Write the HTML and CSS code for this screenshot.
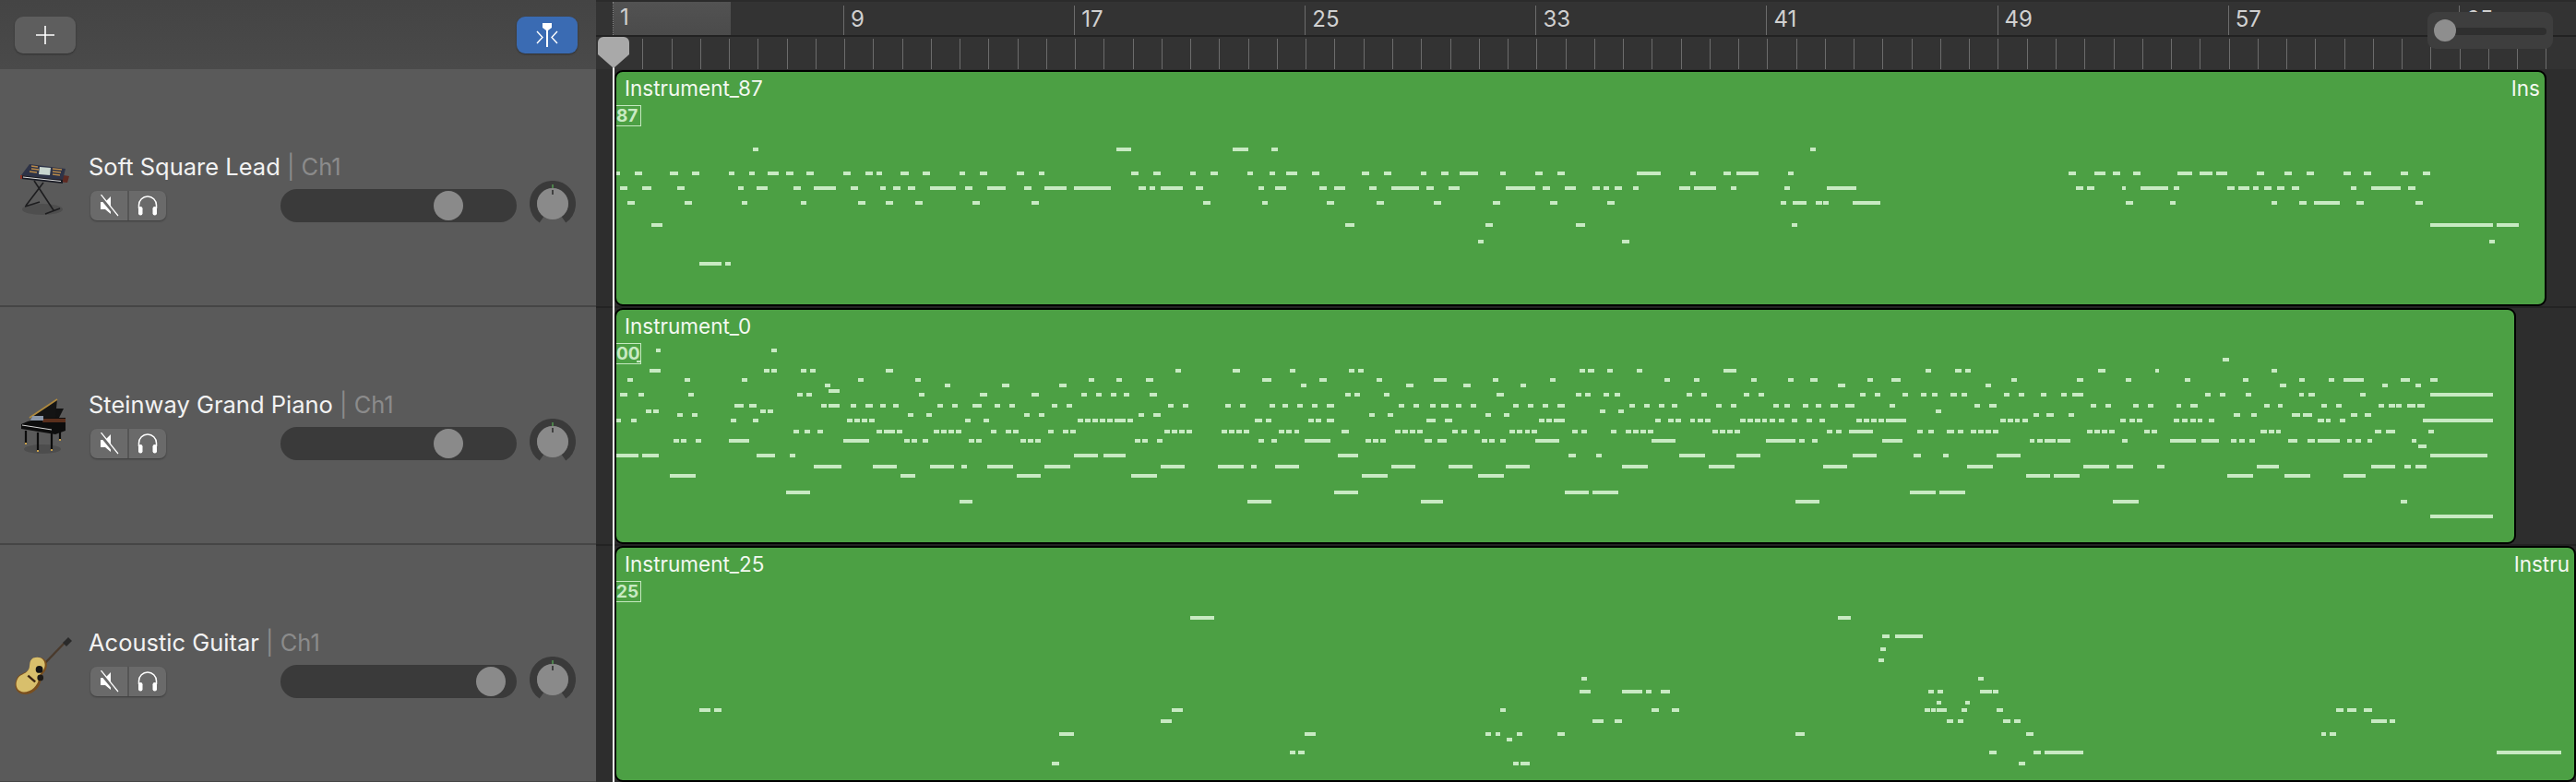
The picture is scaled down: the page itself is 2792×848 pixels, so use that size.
FILE: index.html
```html
<!DOCTYPE html>
<html>
<head>
<meta charset="utf-8">
<title>Tracks</title>
<link rel="stylesheet" href="styles.css">
</head>
<body>
<svg class="defs" width="0" height="0">
  <symbol id="mute" viewBox="0 0 24 24">
    <path d="M3 8H8L14 2V21L8 16H3Z" fill="#fff"/>
    <path d="M1 0L20 23" stroke="#6a6a6a" stroke-width="3.4"/>
    <path d="M3.5 0L22 23" stroke="#fff" stroke-width="1.2"/>
  </symbol>
  <symbol id="phones" viewBox="0 0 24 24">
    <path d="M2.5 15V11.5A9.5 9.5 0 0 1 21.500 11.500V15" fill="none" stroke="#fff" stroke-width="1.5"/>
    <rect x="2" y="13" width="4.500" height="9.500" rx="2.200" fill="#fff"/>
    <rect x="17.500" y="13" width="4.500" height="9.500" rx="2.200" fill="#fff"/>
  </symbol>
  <symbol id="knob" viewBox="0 0 50 50">
    <path d="M13 42.200A21 21 0 1 1 37 42.200" fill="none" stroke="#3a3a3a" stroke-width="8"/>
    <circle cx="25" cy="25" r="17" fill="#8a8a8a"/>
    <path d="M25 4V8" stroke="#5fc65a" stroke-width="1"/>
    <path d="M25 10V15" stroke="#111" stroke-width="1.200"/>
  </symbol>
</svg>

<div class="sidebar">
  <div class="side-head">
    <button class="tool-btn">
      <svg width="22" height="22" viewBox="0 0 22 22"><path d="M11 1V21M1 11H21" stroke="#fff" stroke-width="1.600"/></svg>
    </button>
    <button class="tool-btn tool-blue">
      <svg width="26" height="26" viewBox="0 0 26 26">
        <path d="M8 0H18V5L14 8V26H12V8L8 5Z" fill="#fff"/>
        <path d="M2 9L8 15.500L2 22M24 9L18 15.500L24 22" fill="none" stroke="#fff" stroke-width="1.400"/>
      </svg>
    </button>
  </div>

  <div class="track">
    <div class="track-icon">
      <svg width="64" height="68" viewBox="0 0 64 68">
        <ellipse cx="30" cy="54" rx="22" ry="6" fill="#484848" opacity=".7"/>
        <path d="M21 23L42 55M31 25L12 50M11 51L27 46M33 59L49 53" stroke="#1d1d1f" stroke-width="1.600" fill="none"/>
        <path d="M46 16L59 18L57 25L44 24Z" fill="#5e2a22"/>
        <path d="M16 5L55 10L52 22L7 17Z" fill="#2e3347"/>
        <path d="M18 7L25 8M18 10L26 11M16 13L24 14M41 10L51 11M41 13L50 14M41 16L49 17" stroke="#b98a4a" stroke-width="1.300"/>
        <path d="M27 8L39 9L38 17L26 16Z" fill="#c9d6cf"/>
        <path d="M7 17L52 22L52 26L7 21Z" fill="#191b24"/>
        <path d="M9 19L50 23.500" stroke="#ddd" stroke-width="1"/>
        <path d="M7 17L7 21" stroke="#8a3226" stroke-width="2"/>
      </svg>
    </div>
    <div class="track-main">
      <div class="track-name">Soft Square Lead <span class="track-ch">| Ch1</span></div>
      <div class="track-row">
        <div class="btn-pair">
          <span class="btn-half"><svg width="24" height="24"><use href="#mute"/></svg></span>
          <span class="btn-half"><svg width="24" height="24"><use href="#phones"/></svg></span>
        </div>
        <div class="fader"><span class="fader-thumb"></span></div>
        <svg class="knob" width="50" height="50"><use href="#knob"/></svg>
      </div>
    </div>
  </div>

  <div class="track">
    <div class="track-icon">
      <svg width="64" height="68" viewBox="0 0 64 68">
        <ellipse cx="30" cy="56" rx="20" ry="5" fill="#474747" opacity=".7"/>
        <path d="M12 36V50M25 38V58M40 38V57M49 34V46" stroke="#0c0c0c" stroke-width="2.200"/>
        <path d="M11 50H13M24 58H26M39 57H41M48 46H50" stroke="#c9a04a" stroke-width="2"/>
        <path d="M34 12H53L48 22H32Z" fill="#121212"/>
        <path d="M16 22L46 2L44 22Z" fill="#141414"/>
        <path d="M16 22L46 2" stroke="#b08a3e" stroke-width="1.800"/>
        <path d="M30 22H55V36L44 40L7 34L7 29L14 26Z" fill="#0d0d0d"/>
        <path d="M31 23H55V27H30Z" fill="#5a2f1c"/>
        <path d="M19 20H31V25H17Z" fill="#8b97a8"/>
        <path d="M8 30L40 35" stroke="#d6d6d6" stroke-width="1"/>
      </svg>
    </div>
    <div class="track-main">
      <div class="track-name">Steinway Grand Piano <span class="track-ch">| Ch1</span></div>
      <div class="track-row">
        <div class="btn-pair">
          <span class="btn-half"><svg width="24" height="24"><use href="#mute"/></svg></span>
          <span class="btn-half"><svg width="24" height="24"><use href="#phones"/></svg></span>
        </div>
        <div class="fader"><span class="fader-thumb"></span></div>
        <svg class="knob" width="50" height="50"><use href="#knob"/></svg>
      </div>
    </div>
  </div>

  <div class="track">
    <div class="track-icon">
      <svg width="64" height="68" viewBox="0 0 64 68">
        <path d="M30 33L55 7" stroke="#4a3a2c" stroke-width="2.400"/>
        <path d="M52 8L58 2L62 6L56 12Z" fill="#2a2a2a"/>
        <g transform="translate(-2.500 -4.500) scale(1.120)">
          <path d="M20 26C28 23 35 28 33 35C32 40 29 40 28 44C28 54 20 62 11 61C3 60 1 53 4 46C6 41 12 41 15 38C18 35 15 29 20 26Z" fill="#7a4f1e"/>
          <path d="M20 26C27 23 33 28 31 35C30 39 27 40 26 44C25 53 18 59 11 59C4 58 2 52 5 46C7 42 12 42 15 38C18 35 15 29 20 26Z" fill="#d8bf6c"/>
          <circle cx="26" cy="37" r="3.500" fill="#141414"/>
          <circle cx="27" cy="45" r="3" fill="#1e1a16"/>
          <path d="M15 43L22 49" stroke="#3a2412" stroke-width="2.200"/>
        </g>
      </svg>
    </div>
    <div class="track-main">
      <div class="track-name">Acoustic Guitar <span class="track-ch">| Ch1</span></div>
      <div class="track-row">
        <div class="btn-pair">
          <span class="btn-half"><svg width="24" height="24"><use href="#mute"/></svg></span>
          <span class="btn-half"><svg width="24" height="24"><use href="#phones"/></svg></span>
        </div>
        <div class="fader fader-high"><span class="fader-thumb"></span></div>
        <svg class="knob" width="50" height="50"><use href="#knob"/></svg>
      </div>
    </div>
  </div>
</div>

<div class="timeline">
  <div class="ruler">
    <div class="bars">
      <div class="bar bar-first">1</div>
      <div class="bar">9</div>
      <div class="bar">17</div>
      <div class="bar">25</div>
      <div class="bar">33</div>
      <div class="bar">41</div>
      <div class="bar">49</div>
      <div class="bar">57</div>
      <div class="bar">65</div>
    </div>
    <div class="ruler-rule"></div>
    <div class="ticks"></div>
    <div class="zoom-slider"><span class="zoom-thumb"></span></div>
  </div>

  <div class="lanes">
    <div class="lane">
      <div class="region region-a">
        <div class="region-head"><span>Instrument_87</span><span>Ins</span></div>
        <div class="region-tag">87</div>
        <svg class="notes" width="2090" height="252" viewBox="668 78 2090 252">
          <g transform="translate(640 0) scale(.44643 1)">
            <path d="M395 162H408M1277 162H1313M1558 162H1568M62 188H72M108 188H126M193 188H212M246 188H264M337 188H349M385 188H399M430 188H457M475 188H493M524 188H542M614 188H632M668 188H686M694 188H708M753 188H772M806 188H824M897 188H909M945 188H963M1035 188H1053M1089 188H1102M1313 188H1331M1366 188H1384M1457 188H1469M1505 188H1523M72 204H90M125 204H148M211 204H228M358 204H372M403 204H430M493 204H511M542 204H596M632 204H650M704 204H717M735 204H753M771 204H788M824 204H887M909 204H927M963 204H1008M1053 204H1071M1102 204H1156M1174 204H1263M1331 204H1348M1357 204H1371M1384 204H1438M1469 204H1487M90 220H108M228 220H246M367 220H381M511 220H524M650 220H668M717 220H735M788 220H806M927 220H945M1071 220H1089M1487 220H1505M148 244H175M264 286H318M327 286H340"/>
          </g>
          <g transform="translate(1340 0) scale(.63776 1)">
            <path d="M0 162H20M60 162H70M975 162H985M19 188H28M56 188H66M85 188H103M129 188H141M213 188H226M251 188H263M314 188H323M348 188H361M379 188H411M448 188H458M508 188H521M546 188H558M681 188H721M771 188H781M828 188H840M850 188H887M937 188H947M1414 188H1427M1458 188H1477M1490 188H1502M38 204H47M66 204H85M141 204H154M166 204H185M226 204H238M263 204H310M323 204H336M361 204H379M458 204H508M521 204H533M558 204H577M605 204H618M624 204H633M643 204H655M674 204H683M753 204H771M778 204H815M840 204H850M931 204H941M1004 204H1054M1427 204H1439M1446 204H1458M44 220H53M154 220H166M238 220H251M336 220H348M436 220H448M533 220H546M630 220H643M925 220H935M946 220H969M985 220H995M998 220H1007M1047 220H1094M185 244H201M423 244H436M577 244H593M944 244H953M411 262H420M655 262H668"/>
          </g>
          <g transform="translate(2300 0) scale(.33333 1)">
            <path d="M36 188H60M180 188H228M252 188H294M306 188H342M438 188H462M528 188H552M600 188H624M720 188H744M786 188H810M906 188H930M978 188H1002M0 204H12M60 204H150M168 204H186M342 204H366M378 204H414M426 204H444M462 204H486M504 204H528M552 204H576M744 204H762M810 204H906M930 204H954M12 220H36M156 220H174M486 220H504M576 220H600M624 220H708M762 220H786M954 220H978M1002 244H1206M1218 244H1290M1194 262H1212"/>
          </g>
        </svg>
      </div>
    </div>

    <div class="lane">
      <div class="region region-b">
        <div class="region-head"><span>Instrument_0</span></div>
        <div class="region-tag region-tag-tail">00</div>
        <svg class="notes" width="2057" height="252" viewBox="668 336 2057 252">
          <g transform="translate(640 0) scale(.44643 1)">
            <path d="M158 380H170M440 380H452M143 402H170M421 402H435M439 402H452M511 402H524M533 402H547M717 402H735M1421 402H1434M1559 402H1568M90 412H103M228 412H241M367 412H381M650 412H663M788 412H802M1210 412H1223M1277 412H1290M1348 412H1366M569 418H582M860 418H874M999 418H1017M1138 418H1156M578 424H605M72 428H90M116 428H130M237 428H251M502 428H515M524 428H538M797 428H811M945 428H963M1071 428H1089M1192 428H1205M1228 428H1241M1264 428H1277M1295 428H1308M1357 428H1375M349 440H372M385 440H403M560 440H574M578 440H605M632 440H645M668 440H686M703 440H717M735 440H748M842 440H856M878 440H892M927 440H950M981 440H995M1017 440H1030M1120 440H1133M1156 440H1169M1402 440H1416M1438 440H1452M1541 440H1555M134 446H148M152 446H166M412 446H426M430 446H443M211 450H224M246 450H260M771 450H784M815 450H829M1053 450H1066M1089 450H1102M1331 450H1344M1366 450H1384M62 456H75M99 456H112M340 456H354M394 456H408M623 456H636M641 456H654M659 456H672M677 456H690M909 456H923M954 456H968M1183 456H1196M1201 456H1214M1219 456H1232M1237 456H1250M1255 456H1268M1273 456H1299M1304 456H1317M493 468H506M520 468H533M551 468H564M694 468H708M712 468H739M744 468H757M833 468H847M851 468H865M869 468H883M887 468H900M972 468H986M1008 468H1022M1026 468H1039M1111 468H1124M1147 468H1160M1165 468H1178M1393 468H1407M1411 468H1425M1429 468H1443M1447 468H1460M1532 468H1546M1550 468H1564M202 478H216M220 478H233M255 478H269M336 478H385M614 478H676M762 478H775M780 478H793M806 478H820M918 478H932M936 478H950M1044 478H1057M1062 478H1075M1080 478H1093M1322 478H1335M1340 478H1353M1375 478H1389M62 494H116M125 494H166M403 494H448M484 494H497M1174 494H1232M1245 494H1299M542 506H609M685 506H744M824 506H883M900 506H914M963 506H1026M1102 506H1165M1384 506H1443M1523 506H1568M193 516H255M753 516H788M1035 516H1093M1313 516H1375M475 534H533M896 544H927"/>
          </g>
          <g transform="translate(1340 0) scale(.63776 1)">
            <path d="M0 402H6M91 402H100M191 402H200M207 402H216M583 402H593M598 402H608M630 402H640M681 402H690M828 402H850M1171 402H1181M1221 402H1233M1239 402H1248M1465 402H1477M1562 402H1568M44 412H60M141 412H154M238 412H248M336 412H358M436 412H445M533 412H543M728 412H737M778 412H787M875 412H884M937 412H947M975 412H988M1073 412H1082M1113 412H1129M1317 412H1327M1428 412H1439M1512 412H1521M110 418H119M289 418H301M386 418H398M483 418H492M1022 418H1035M1273 418H1283M185 428H194M201 428H210M251 428H260M442 428H455M577 428H586M593 428H602M624 428H633M643 428H652M765 428H775M790 428H800M862 428H872M887 428H897M1060 428H1069M1085 428H1094M1132 428H1142M1163 428H1173M1182 428H1192M1214 428H1224M1233 428H1242M1305 428H1314M1330 428H1339M1367 428H1377M1402 428H1411M1421 428H1439M6 440H16M56 440H66M78 440H88M103 440H113M129 440H138M154 440H166M276 440H285M301 440H310M329 440H339M348 440H361M373 440H383M398 440H408M470 440H480M495 440H505M521 440H530M546 440H558M668 440H677M693 440H702M718 440H728M740 440H750M815 440H825M840 440H850M913 440H922M931 440H941M963 440H972M985 440H994M1010 440H1022M1035 440H1051M1110 440H1120M1254 440H1264M1279 440H1292M1452 440H1461M1477 440H1486M1524 440H1533M1549 440H1559M618 446H627M649 446H659M1189 446H1198M226 450H235M257 450H267M423 450H433M455 450H464M1355 450H1364M1377 450H1389M1414 450H1424M31 456H44M50 456H60M122 456H131M135 456H144M154 456H166M323 456H339M354 456H367M514 456H523M527 456H536M539 456H558M712 456H721M734 456H743M747 456H756M771 456H780M784 456H793M797 456H806M856 456H865M869 456H878M881 456H890M893 456H902M906 456H916M922 456H931M944 456H953M969 456H978M991 456H1000M1054 456H1063M1067 456H1076M1079 456H1088M1091 456H1101M1104 456H1138M1298 456H1307M1311 456H1320M1323 456H1332M1336 456H1345M1502 456H1512M1518 456H1527M1531 456H1540M0 468H9M13 468H22M72 468H81M85 468H94M98 468H107M179 468H191M270 468H279M282 468H291M295 468H304M308 468H317M367 468H377M383 468H392M405 468H414M464 468H473M477 468H486M490 468H499M502 468H511M571 468H580M587 468H596M637 468H646M662 468H671M674 468H683M686 468H696M699 468H709M809 468H818M822 468H831M834 468H843M847 468H856M1004 468H1013M1019 468H1028M1041 468H1082M1157 468H1167M1176 468H1185M1208 468H1220M1226 468H1236M1248 468H1258M1261 468H1270M1273 468H1282M1286 468H1295M1446 468H1455M1458 468H1467M1471 468H1480M1484 468H1493M1543 468H1552M1556 468H1565M38 478H47M60 478H69M116 478H160M220 478H229M232 478H241M245 478H254M320 478H332M342 478H358M417 478H426M430 478H439M448 478H458M508 478H549M706 478H746M900 478H950M956 478H966M978 478H988M1098 478H1132M1348 478H1357M1361 478H1370M1374 478H1392M1396 478H1417M1505 478H1515M172 494H207M564 494H577M612 494H621M753 494H797M850 494H891M1047 494H1088M1151 494H1163M1201 494H1210M1292 494H1333M0 506H13M25 506H34M66 506H107M263 506H304M361 506H401M458 506H499M655 506H699M803 506H847M997 506H1038M1242 506H1286M1439 506H1483M1496 506H1524M213 516H257M411 516H455M1342 516H1383M1389 516H1433M166 534H207M558 534H599M605 534H649M1145 534H1189M1195 534H1239M19 544H60M314 544H351M950 544H991M1490 544H1534"/>
          </g>
          <g transform="translate(1340 0) scale(.92593 1)">
            <path d="M1155 390H1162M1212 402H1218M1110 412H1117M1178 412H1185M1244 412H1251M1279 412H1285M1296 412H1320M1363 412H1374M1397 412H1406M1222 418H1229M1341 418H1348M1380 418H1387M1134 428H1140M1151 428H1158M1181 428H1188M1244 428H1250M1255 428H1263M1315 428H1322M1397 428H1471M1100 440H1106M1117 440H1125M1203 440H1210M1219 440H1225M1270 440H1277M1287 440H1294M1337 440H1344M1349 440H1356M1358 440H1364M1371 440H1380M1382 440H1391M1168 450H1175M1188 450H1195M1235 450H1245M1248 450H1259M1305 450H1312M1321 450H1328M1097 456H1104M1107 456H1114M1117 456H1123M1125 456H1131M1138 456H1145M1266 456H1273M1275 456H1281M1292 456H1298M1389 456H1471M1199 468H1206M1209 468H1215M1217 468H1223M1333 468H1340M1346 468H1357M1395 468H1402M1093 478H1123M1130 478H1150M1164 478H1171M1174 478H1180M1186 478H1192M1231 478H1242M1254 478H1262M1266 478H1292M1300 478H1306M1310 478H1316M1324 478H1330M1376 478H1381M1384 484H1393M1397 494H1464M1078 506H1086M1194 506H1220M1328 506H1356M1367 506H1375M1380 506H1393M1160 516H1190M1227 516H1257M1296 516H1322M1363 544H1371M1397 560H1471"/>
          </g>
        </svg>
      </div>
    </div>

    <div class="lane">
      <div class="region region-c">
        <div class="region-head"><span>Instrument_25</span><span>Instru</span></div>
        <div class="region-tag">25</div>
        <svg class="notes" width="2122" height="252" viewBox="668 594 2122 252">
          <g transform="translate(640 0) scale(.44643 1)">
            <path d="M1456 670H1514M264 770H291M300 770H318M1411 770H1438M1384 782H1411M1138 796H1174M1120 828H1138"/>
          </g>
          <g transform="translate(1340 0) scale(.92593 1)">
            <path d="M704 670H719M756 690H765M771 690H803M754 704H760M752 716H758M404 736H410M868 736H875M402 750H415M451 750H475M479 750H486M497 750H508M810 750H816M821 750H827M870 750H885M886 750H892M820 762H825M853 762H859M309 770H315M486 770H495M510 770H518M806 770H812M813 770H819M820 770H832M849 770H855M890 770H898M1287 770H1296M1300 770H1311M1320 770H1329M417 782H430M443 782H451M832 782H839M845 782H851M898 782H906M910 782H918M1328 782H1347M1350 782H1356M80 796H93M292 796H298M303 796H309M328 796H335M376 796H384M654 796H665M924 796H933M1270 796H1275M1280 796H1287M316 802H323M63 816H69M72 816H80M881 816H890M933 816H942M946 816H991M1475 816H1551M324 828H330M333 828H343M916 828H923"/>
          </g>
        </svg>
      </div>
    </div>
  </div>

  <div class="playhead">
    <svg class="playhead-cap" width="34" height="34" viewBox="0 0 34 34"><path d="M6 0H28A6 6 0 0 1 34 6V19L17 34L0 19V6A6 6 0 0 1 6 0Z" fill="#a9a9a9"/></svg>
  </div>
</div>
</body>
</html>
```

FILE: styles.css
```css
html, body {
  margin: 0;
  height: 848px;
  overflow: hidden;
}
body {
  display: flex;
  width: 2792px;
  background: #2d2d2d;
  font-family: Inter, "Liberation Sans", sans-serif;
}
.defs {
  position: absolute;
}

/* left column */
.sidebar {
  flex: none;
  width: 646px;
  background: #5a5a5a;
}
.side-head {
  display: flex;
  justify-content: space-between;
  align-items: flex-start;
  box-sizing: border-box;
  height: 75px;
  padding: 18px 20px 0 16px;
  background: linear-gradient(#444444, #4a4a4a);
}
.tool-btn {
  display: flex;
  align-items: center;
  justify-content: center;
  width: 66px;
  height: 40px;
  padding: 0;
  border: 0;
  border-radius: 9px;
  background: #5e5e5e;
  box-shadow: 0 1px 2px rgba(0,0,0,.35);
}
.tool-blue {
  background: #3a6bb3;
}
.track {
  display: flex;
  align-items: center;
  box-sizing: border-box;
  height: 258px;
  padding: 8px 22px 0 16px;
  border-bottom: 2px solid #454545;
}
.track-icon {
  flex: none;
  width: 64px;
  height: 68px;
  margin-right: 16px;
}
.track-main {
  flex: 1;
}
.track-name {
  height: 28px;
  margin-bottom: 3px;
  font-size: 25.5px;
  line-height: 28px;
  color: #f2f2f2;
  white-space: nowrap;
}
.track-ch {
  color: #8b8b8b;
}
.track-row {
  display: flex;
  align-items: center;
  height: 50px;
}
.btn-pair {
  display: flex;
  width: 82px;
  height: 32px;
  margin-left: 2px;
  border-radius: 7px;
  background: #6a6a6a;
  box-shadow: 0 1px 2px rgba(0,0,0,.35);
}
.btn-half {
  display: flex;
  flex: 1;
  align-items: center;
  justify-content: center;
}
.btn-half:first-child {
  border-right: 2px solid #555;
}
.fader {
  display: flex;
  align-items: center;
  justify-content: flex-end;
  box-sizing: border-box;
  width: 256px;
  height: 36px;
  margin-left: auto;
  padding-right: 58px;
  border-radius: 18px;
  background: #3a3a3a;
}
.fader-high {
  padding-right: 12px;
}
.fader-thumb {
  width: 32px;
  height: 32px;
  border-radius: 50%;
  background: #8a8a8a;
}
.knob {
  flex: none;
  margin: -4px 0 0 14px;
}

/* timeline */
.timeline {
  position: relative;
  flex: none;
  width: 2146px;
}
.ruler {
  position: relative;
  height: 75px;
  background: #333;
}
.bars {
  display: flex;
  box-sizing: border-box;
  height: 38px;
  padding-left: 18px;
  border-top: 2px solid #2b2b2b;
  overflow: hidden;
}
.bar {
  flex: none;
  box-sizing: border-box;
  width: 250.1px;
  height: 32px;
  margin-top: 4px;
  padding-left: 7px;
  border-left: 1px solid #6c6c6c;
  font-size: 24px;
  line-height: 30px;
  color: #d0d0d0;
}
.bar-first {
  height: 36px;
  margin-top: 0;
  padding-top: 2px;
  border-left: 1px dotted #888;
  background: linear-gradient(#525252, #4b4b4b) no-repeat left / 127px 100%;
}
.ruler-rule {
  height: 2px;
  background: #222;
}
.ticks {
  width: 2096px;
  height: 33px;
  margin: 2px 0 0 18.6px;
  background: repeating-linear-gradient(90deg, #6c6c6c 0 1px, transparent 1px 31.26px);
}
.zoom-slider {
  position: absolute;
  top: 13px;
  right: 25px;
  display: flex;
  align-items: center;
  box-sizing: border-box;
  width: 136px;
  height: 40px;
  padding-left: 7px;
  border-radius: 9px;
  background: #3e3e3e;
}
.zoom-slider::before {
  content: "";
  position: absolute;
  left: 19px;
  right: 7px;
  top: 17px;
  height: 8px;
  border-radius: 4px;
  background: #2f2f2f;
}
.zoom-thumb {
  position: relative;
  width: 24px;
  height: 24px;
  border-radius: 50%;
  background: #8e8e8e;
}
.lanes {
  padding: 1px 0 0 20px;
}
.lane {
  box-sizing: border-box;
  height: 258px;
  border-bottom: 2px solid #232323;
  margin-left: -20px;
  padding-left: 20px;
}
.region {
  position: relative;
  box-sizing: border-box;
  height: 256px;
  border: 2px solid #000;
  border-radius: 9px;
  background: #4ca044;
  color: #f2f8f0;
  overflow: hidden;
}
.region-a { width: 2094px; }
.region-b { width: 2061px; }
.region-c { width: 2126px; }
.region-head {
  display: flex;
  justify-content: space-between;
  height: 29px;
  padding: 3px 5px 0 9px;
  font-size: 22.5px;
  line-height: 30px;
  white-space: nowrap;
}
.region-tag {
  position: relative;
  box-sizing: border-box;
  width: 27px;
  height: 23px;
  margin-top: 4px;
  border: 1px solid #c5e8c0;
  border-left: 0;
  font-size: 19px;
  font-weight: 700;
  line-height: 21px;
  color: #c8eac3;
}
.region-tag-tail::after {
  content: "";
  position: absolute;
  right: 0;
  bottom: 1px;
  width: 4px;
  height: 2px;
  background: #c8eac3;
}
.notes {
  position: absolute;
  left: 0;
  top: 0;
  fill: none;
  stroke: #c8eac3;
  stroke-width: 4;
  shape-rendering: crispEdges;
}
.playhead {
  position: absolute;
  z-index: 1;
  top: 46px;
  bottom: 0;
  left: 18px;
  width: 2px;
  background: #fff;
}
.playhead-cap {
  position: absolute;
  z-index: -1;
  top: -6px;
  left: -16px;
}
```
